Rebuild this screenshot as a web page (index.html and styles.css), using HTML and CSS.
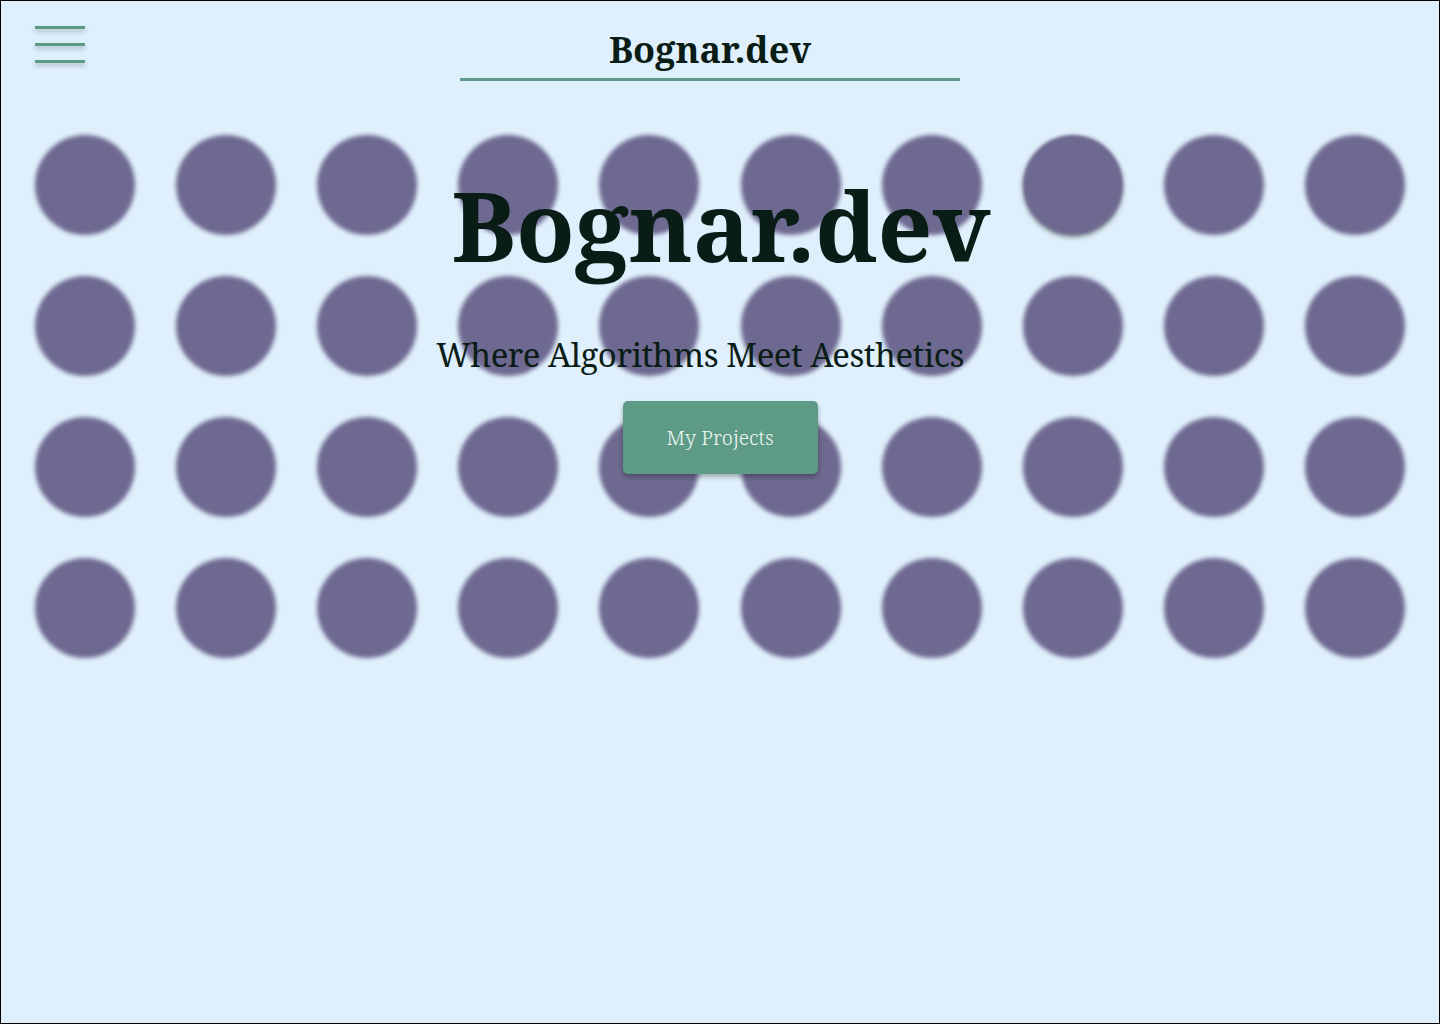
FILE: index.html
```html
<!DOCTYPE html>
<html lang="en">
<head>
<meta charset="utf-8">
<title>Bognar.dev</title>
<link rel="stylesheet" href="styles.css">
</head>
<body>
<div class="page">
  <header class="header">
    <button class="menu" aria-label="Menu">
      <span class="bar"></span><span class="bar"></span><span class="bar"></span>
    </button>
    <div class="brand">
      <div class="brand-name">Bognar.dev</div>
    </div>
  </header>
  <main class="hero">
    <div class="dots">
      <span class="dot"></span><span class="dot"></span><span class="dot"></span><span class="dot"></span><span class="dot"></span><span class="dot"></span><span class="dot"></span><span class="dot hover"></span><span class="dot"></span><span class="dot"></span>
      <span class="dot"></span><span class="dot"></span><span class="dot"></span><span class="dot"></span><span class="dot"></span><span class="dot"></span><span class="dot"></span><span class="dot"></span><span class="dot"></span><span class="dot"></span>
      <span class="dot"></span><span class="dot"></span><span class="dot"></span><span class="dot"></span><span class="dot"></span><span class="dot"></span><span class="dot"></span><span class="dot"></span><span class="dot"></span><span class="dot"></span>
      <span class="dot"></span><span class="dot"></span><span class="dot"></span><span class="dot"></span><span class="dot"></span><span class="dot"></span><span class="dot"></span><span class="dot"></span><span class="dot"></span><span class="dot"></span>
    </div>
    <div class="hero-text">
      <h1 class="title">Bognar.dev</h1>
      <p class="subtitle">Where Algorithms Meet Aesthetics</p>
      <a class="cta" href="#">My Projects</a>
    </div>
  </main>
</div>
</body>
</html>
```
FILE: styles.css
```css
* { box-sizing: border-box; }
html, body { margin: 0; padding: 0; }
body {
  background: #dfeffc;
  font-family: "Noto Serif", "DejaVu Serif", "Liberation Serif", serif;
  color: #0a1c16;
}
.page {
  width: 1440px;
  height: 1024px;
  border: 1px solid #000;
  background: #dfeffc;
  overflow: hidden;
}
.header {
  display: flex;
  align-items: flex-start;
  padding: 25px 0 0 34px;
  height: 134px;
}
.menu {
  width: 50px;
  height: 40px;
  padding: 0;
  margin: 0;
  border: 0;
  background: none;
  display: flex;
  flex-direction: column;
  gap: 14px;
}
.bar {
  display: block;
  width: 50px;
  height: 3px;
  background: #5b9a85;
  box-shadow: 0 3px 4px rgba(80, 90, 100, 0.35);
}
.brand {
  width: 500px;
  margin-left: 375px;
  border-bottom: 3px solid #5f9a8a;
  text-align: center;
  padding-top: 1px;
}
.brand-name {
  font-size: 36px;
  font-weight: 700;
  line-height: 46px;
  padding-bottom: 5px;
  color: #0a1c16;
}
.hero {
  position: relative;
}
.dots {
  display: grid;
  grid-template-columns: repeat(10, 100px);
  justify-content: space-between;
  row-gap: 41px;
  padding: 0 34px;
}
.dot {
  width: 100px;
  height: 100px;
  border-radius: 50%;
  background: #6e6990;
  filter: blur(2px);
}
.dot.hover {
  filter: blur(1.5px);
  box-shadow: 0 2px 4px rgba(30, 40, 30, 0.55);
}
.hero-text {
  position: absolute;
  z-index: 1;
  top: 0;
  left: 0;
  right: 0;
  display: flex;
  flex-direction: column;
  align-items: center;
}
.title {
  margin: 25px 0 0 2px;
  font-size: 96px;
  font-weight: 700;
  line-height: 130px;
  color: #0a1c16;
}
.subtitle {
  margin: 41px 40px 0 0;
  font-size: 33px;
  font-weight: 400;
  line-height: 48px;
  color: #0a1c16;
  letter-spacing: -0.5px;
}
.cta {
  margin-top: 22px;
  width: 195px;
  height: 73px;
  display: flex;
  align-items: center;
  justify-content: center;
  background: #5e9b86;
  color: #eef6f2;
  border-radius: 5px;
  text-decoration: none;
  font-size: 20px;
  font-weight: 300;
  box-shadow: 0 3px 5px rgba(0, 0, 0, 0.3);
}
```
